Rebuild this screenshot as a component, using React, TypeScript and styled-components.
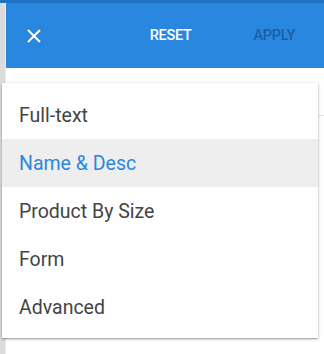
import React from 'react';
import styled, { createGlobalStyle } from 'styled-components';

const items = [
    { id: 0, label: 'Full-text' },
    { id: 1, label: 'Name & Desc' },
    { id: 2, label: 'Product By Size' },
    { id: 3, label: 'Form' },
    { id: 4, label: 'Advanced' }
];

const GlobalStyle = createGlobalStyle`
    html, body {
        margin: 0;
        padding: 0;
        background: #ffffff;
        font-family: Roboto, "Liberation Sans", sans-serif;
    }
`;

const App = () => {
    const selected = 1;
    return (
        <Page>
            <GlobalStyle />
            <TopStrip />
            <Body>
                <SideStrip />
                <Main>
                    <Header>
                        <CloseButton aria-label="close">
                            <svg width="14" height="14" viewBox="0 0 14 14">
                                <path d="M1 1 L13 13 M13 1 L1 13" stroke="#fff" strokeWidth="2" />
                            </svg>
                        </CloseButton>
                        <Action>RESET</Action>
                        <Action disabled>APPLY</Action>
                    </Header>
                    <Content>
                        <Divider />
                    </Content>
                </Main>
            </Body>
            <Menu>
                {items.map((row) => (
                    <MenuItem key={row.id} active={row.id === selected}>
                        {row.label}
                    </MenuItem>
                ))}
            </Menu>
        </Page>
    );
};

export default App;

const Page = styled.div`
    position: relative;
    width: 324px;
    height: 354px;
    overflow: hidden;
`;

const TopStrip = styled.div`
    height: 3px;
    background: #1f72c6;
`;

const Body = styled.div`
    display: flex;
    height: 351px;
`;

const SideStrip = styled.div`
    width: 5px;
    background: #dcdcdc;
    border-right: 1px solid #ececec;
`;

const Main = styled.div`
    flex: 1;
    display: flex;
    flex-direction: column;
`;

const Header = styled.div`
    height: 65px;
    background: #2987e0;
    display: flex;
    align-items: center;
    padding: 0 29px 0 21px;
`;

const CloseButton = styled.div`
    width: 14px;
    height: 14px;
    display: flex;
    margin-right: auto;
`;

const Action = styled.div<{ disabled?: boolean }>`
    font-size: 14.5px;
    font-weight: 500;
    color: ${(p) => (p.disabled ? '#1b5ea6' : '#ffffff')};
    margin-left: ${(p) => (p.disabled ? '62px' : '0')};
    letter-spacing: -0.3px;
`;

const Content = styled.div`
    flex: 1;
    background: #ffffff;
    position: relative;
`;

const Divider = styled.div`
    margin-top: 47px;
    height: 1px;
    background: #e4e4e4;
`;

const Menu = styled.ul`
    position: absolute;
    top: 83px;
    left: 2px;
    width: 316px;
    margin: 0;
    padding: 8px 0 7px;
    list-style: none;
    background: #ffffff;
    box-shadow: 0 1px 3px rgba(0, 0, 0, 0.3), 0 1px 1px rgba(0, 0, 0, 0.14);
`;

const MenuItem = styled.li<{ active?: boolean }>`
    height: 48px;
    display: flex;
    align-items: center;
    padding: 0 17px;
    font-size: 19.5px;
    color: ${(p) => (p.active ? '#2b87e0' : '#444444')};
    background: ${(p) => (p.active ? '#eeeeee' : 'transparent')};
`;
